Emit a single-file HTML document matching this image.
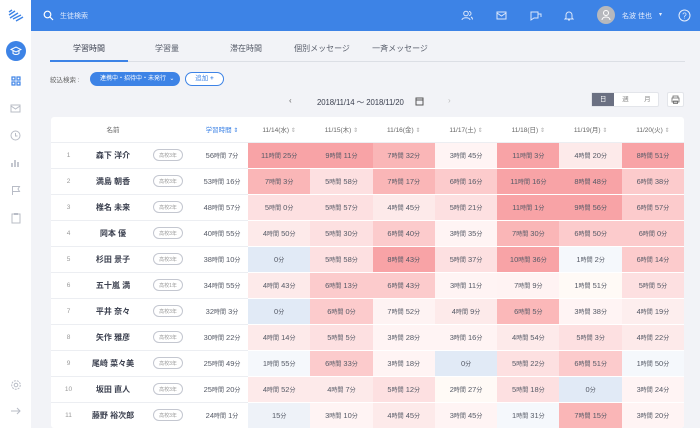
<!DOCTYPE html>
<html><head><meta charset="utf-8"><style>
*{box-sizing:border-box;margin:0;padding:0}
body{width:700px;height:428px;overflow:hidden;background:#f2f3f7;font-family:"Liberation Sans","Noto Sans CJK JP",sans-serif;color:#4a4f5c;position:relative}
.abs{position:absolute}
#side{left:0;top:0;width:31px;height:428px;background:#fff}
#top{left:31px;top:0;width:669px;height:31px;background:#3d83e6}
.tab{position:absolute;top:43px;font-size:8px;color:#555b68;transform:translateX(-50%)}
table{border-collapse:collapse;table-layout:fixed}
td,th{height:26px;font-size:7.5px;text-align:center;border-bottom:1px solid #eceef2;font-weight:normal;color:#555a66;white-space:nowrap}
th{height:25px;font-size:6.5px;color:#666}
td.n{font-weight:bold;color:#3c4150;font-size:8px}
td.i{color:#999;font-size:6.5px}
.b{display:inline-block;border:1px solid #c4c7d0;border-radius:8px;font-size:5px;padding:1.5px 5px;color:#999}
td.d{border-bottom:none}
.s{font-size:6px;color:#aaa}
</style></head><body>
<div id="side" class="abs">
<svg class="abs" style="left:8px;top:9px" width="16" height="14" viewBox="0 0 16 14"><g stroke="#3d83e6" stroke-width="1.4"><line x1="1" y1="3" x2="4" y2="1"/><line x1="1" y1="6" x2="7" y2="2"/><line x1="2" y1="9" x2="10" y2="4"/><line x1="5" y1="10" x2="13" y2="6"/><line x1="8" y1="12" x2="15" y2="8"/></g></svg>
<div class="abs" style="left:6px;top:41px;width:20px;height:20px;border-radius:50%;background:#3d83e6"></div>
<svg class="abs" style="left:10px;top:46px" width="12" height="10" viewBox="0 0 12 10"><path d="M1 3.5L6 1l5 2.5L6 6z M3 5v2.5c1.5 1.3 4.5 1.3 6 0V5" fill="none" stroke="#fff" stroke-width="1"/></svg>
<svg class="abs" style="left:11px;top:76px" width="10" height="10"><g fill="none" stroke="#3d83e6" stroke-width="1.2"><rect x="1" y="1" width="3" height="3"/><rect x="6" y="1" width="3" height="3"/><rect x="1" y="6" width="3" height="3"/><rect x="6" y="6" width="3" height="3"/></g></svg>
<svg class="abs" style="left:10px;top:103px" width="11" height="10"><path d="M1 2h9v7H1z M1 3l4.5 3L10 3" fill="none" stroke="#b8bcc6"/></svg>
<svg class="abs" style="left:10px;top:130px" width="11" height="11"><circle cx="5.5" cy="5.5" r="4.5" fill="none" stroke="#b8bcc6"/><path d="M5.5 3v3h2" fill="none" stroke="#b8bcc6"/></svg>
<svg class="abs" style="left:10px;top:157px" width="11" height="11"><path d="M1 10V6h2v4 M4 10V3h2v7 M7 10V5h2v5" fill="#c4c7cf"/></svg>
<svg class="abs" style="left:11px;top:185px" width="10" height="11"><path d="M1.5 10V1.5h7l-1.5 2.5 1.5 2.5h-7" fill="none" stroke="#b8bcc6"/></svg>
<svg class="abs" style="left:11px;top:212px" width="10" height="12"><rect x="1" y="2" width="8" height="9" fill="none" stroke="#b8bcc6"/><rect x="3" y="1" width="4" height="2" fill="#b8bcc6"/></svg>
<svg class="abs" style="left:10px;top:379px" width="12" height="12"><circle cx="6" cy="6" r="4.3" fill="none" stroke="#b8bcc6" stroke-dasharray="2 1"/><circle cx="6" cy="6" r="1.8" fill="none" stroke="#b8bcc6"/></svg>
<svg class="abs" style="left:10px;top:406px" width="12" height="10"><path d="M1 5h9 M7 2l3 3-3 3" fill="none" stroke="#b8bcc6"/></svg>
</div>
<div id="top" class="abs">
<svg class="abs" style="left:12px;top:10px" width="11" height="11"><circle cx="4.5" cy="4.5" r="3.3" fill="none" stroke="#fff" stroke-width="1.2"/><line x1="7" y1="7" x2="10" y2="10" stroke="#fff" stroke-width="1.2"/></svg>
<div class="abs" style="left:29px;top:11px;font-size:7px;color:#dbe7fb">生徒検索</div>
<svg class="abs" style="left:430px;top:10px" width="12" height="11"><g fill="none" stroke="#dbe7fb"><circle cx="5" cy="3.5" r="2.3"/><path d="M1 10c0-3 8-3 8 0 M8 1.5a2 2 0 010 4 M10 7c1 .5 1.5 1.5 1.5 2.5"/></g></svg>
<svg class="abs" style="left:465px;top:11px" width="11" height="9"><path d="M1 1h9v7H1z M1 2l4.5 3L10 2" fill="none" stroke="#dbe7fb"/></svg>
<svg class="abs" style="left:499px;top:10px" width="12" height="11"><path d="M1 2h7v6H4l-3 2z M8 4h3v3" fill="none" stroke="#dbe7fb"/></svg>
<svg class="abs" style="left:533px;top:10px" width="10" height="11"><path d="M2 8V5a3 3 0 016 0v3l1 1H1z M4 10h2" fill="none" stroke="#dbe7fb"/></svg>
<div class="abs" style="left:566px;top:6px;width:18px;height:18px;border-radius:50%;background:#b6b8bd"></div>
<svg class="abs" style="left:570px;top:9px" width="10" height="12"><circle cx="5" cy="4" r="2.5" fill="none" stroke="#fff"/><path d="M1 11c0-4 8-4 8 0" fill="none" stroke="#fff"/></svg>
<div class="abs" style="left:591px;top:11px;font-size:7px;color:#e6eefc">名波 佳也</div>
<div class="abs" style="left:628px;top:11px;font-size:6px;color:#e6eefc">▾</div>
<svg class="abs" style="left:647px;top:9px" width="13" height="13"><circle cx="6.5" cy="6.5" r="5.5" fill="none" stroke="#e6eefc"/><text x="6.5" y="9.3" font-size="8" text-anchor="middle" fill="#e6eefc" font-family="Liberation Sans">?</text></svg>
</div>
<div class="tab" style="left:89px;color:#3c4150">学習時間</div>
<div class="tab" style="left:167px">学習量</div>
<div class="tab" style="left:246px">滞在時間</div>
<div class="tab" style="left:322px">個別メッセージ</div>
<div class="tab" style="left:400px">一斉メッセージ</div>
<div class="abs" style="left:50px;top:61px;width:635px;height:1px;background:#dcdfe5"></div>
<div class="abs" style="left:50px;top:60px;width:78px;height:2px;background:#3d83e6"></div>
<div class="abs" style="left:50px;top:74px;font-size:6.5px;color:#666">絞込検索 :</div>
<div class="abs" style="left:90px;top:72px;width:90px;height:14px;border-radius:8px;background:#3d83e6;color:#fff;font-size:6px;line-height:14px;padding-left:10px">連携中・招待中・未発行 &nbsp;⌄</div>
<div class="abs" style="left:185px;top:72px;width:39px;height:14px;border-radius:8px;border:1px solid #3d83e6;background:#fff;color:#3d83e6;font-size:6.5px;line-height:12px;text-align:center">追加 <b>+</b></div>
<div class="abs" style="left:289px;top:96px;font-size:8px;color:#666">‹</div>
<div class="abs" style="left:317px;top:97px;font-size:7.8px;color:#3c4150;letter-spacing:-0.1px">2018/11/14 〜 2018/11/20</div>
<svg class="abs" style="left:415px;top:96px" width="9" height="10"><rect x="1" y="2" width="7" height="7" fill="none" stroke="#555"/><line x1="1" y1="4" x2="8" y2="4" stroke="#555"/></svg>
<div class="abs" style="left:448px;top:96px;font-size:8px;color:#bbb">›</div>
<div class="abs" style="left:591px;top:92px;width:68px;height:15px;background:#fff;border:1px solid #e3e5ea;border-radius:2px;font-size:6.5px;color:#888;line-height:13px;display:flex">
<div style="width:23px;background:#6b7082;color:#fff;text-align:center">日</div><div style="width:23px;text-align:center">週</div><div style="width:22px;text-align:center">月</div></div>
<div class="abs" style="left:667px;top:92px;width:17px;height:15px;background:#fff;border:1px solid #e3e5ea;border-radius:2px"></div>
<svg class="abs" style="left:671px;top:95px" width="9" height="9"><path d="M2 3V1h5v2 M1 3h7v4H1z M2.5 6h4v2.5h-4z" fill="none" stroke="#666" stroke-width=".8"/></svg>
<div class="abs" style="left:51px;top:117px;width:633px;height:311px;background:#fff;border-radius:3px;overflow:hidden">
<table id="t" style="width:633px">
<colgroup><col style="width:35px"><col style="width:54px"><col style="width:56px"><col style="width:52px"><col span="7" style="width:62.3px"></colgroup>
<thead><tr><th></th><th>名前</th><th></th><th style="color:#3d83e6">学習時間 <span style="font-size:6px">⇕</span></th>
<th>11/14(水) <span class="s">⇕</span></th><th>11/15(木) <span class="s">⇕</span></th><th>11/16(金) <span class="s">⇕</span></th><th>11/17(土) <span class="s">⇕</span></th><th>11/18(日) <span class="s">⇕</span></th><th>11/19(月) <span class="s">⇕</span></th><th>11/20(火) <span class="s">⇕</span></th></tr></thead>
<tbody id="tb"></tbody></table></div>
<script>
var R=[["森下 洋介","3","56時間 7分",[685,551,452,225,663,260,531]],
["満島 朝香","3","53時間 16分",[423,358,437,376,676,528,398]],
["椎名 未来","2","48時間 57分",[300,357,285,321,661,596,417]],
["岡本 優","3","40時間 55分",[290,330,400,215,450,410,360]],
["杉田 景子","3","38時間 10分",[0,358,523,337,636,62,374]],
["五十嵐 満","1","34時間 55分",[283,373,403,191,429,111,305]],
["平井 奈々","3","32時間 3分",[0,360,472,249,365,218,259]],
["矢作 雅彦","3","30時間 22分",[254,305,208,196,294,303,262]],
["尾崎 菜々美","3","25時間 49分",[115,393,198,0,322,411,110]],
["坂田 直人","3","25時間 20分",[292,247,312,147,318,0,204]],
["藤野 裕次郎","3","24時間 1分",[15,190,285,225,91,435,200]]];
var OV={"5,4":"#fff3f3","5,5":"#fffaf6","6,2":"#fef3f3","6,4":"#fbb8b9","6,6":"#fdeeee"};
function col(m){if(m==0)return"#e1eaf6";if(m<60)return"#eef2f8";if(m<120)return"#f5f8fc";if(m<180)return"#fffaf6";if(m<240)return"#fff4f4";if(m<300)return"#fdeaea";if(m<360)return"#fde0e1";if(m<420)return"#fccbcc";if(m<480)return"#fab6b7";return"#f8a3a6";}
function f(m){var h=Math.floor(m/60),n=m%60;return h?h+"<span style='font-size:6px'>時間</span> "+n+"<span style='font-size:6px'>分</span>":n+"<span style='font-size:6px'>分</span>";}
var s="";R.forEach(function(r,i){s+="<tr><td class='i'>"+(i+1)+"</td><td class='n'>"+r[0]+"</td><td><span class='b'>高校"+r[1]+"年</span></td><td>"+r[2].replace(/時間/,"<span style='font-size:6px'>時間</span>").replace(/分/,"<span style='font-size:6px'>分</span>")+"</td>";r[3].forEach(function(m,j){var c=OV[i+","+j]||col(m);s+="<td class='d' style='background:"+c+";border-bottom:1px solid #fff'>"+f(m)+"</td>"});s+="</tr>";});
document.getElementById("tb").innerHTML=s;
</script>
</body></html>
